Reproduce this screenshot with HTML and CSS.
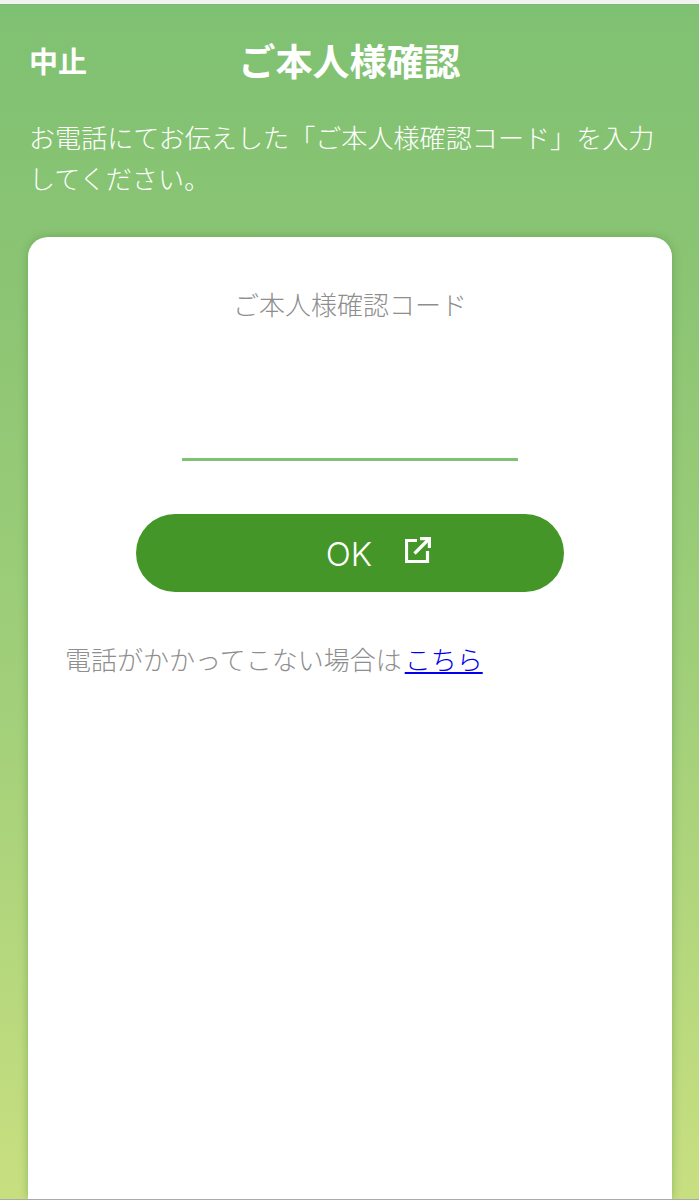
FILE: index.html
```html
<!DOCTYPE html>
<html lang="ja">
<head>
<meta charset="utf-8">
<title>ご本人様確認</title>
<link rel="stylesheet" href="styles.css">
</head>
<body>
<div class="screen">
  <header class="topbar">
    <a class="cancel">中止</a>
    <h1 class="title">ご本人様確認</h1>
  </header>
  <p class="intro">お電話にてお伝えした「ご本人様確認コード」を入力してください。</p>
  <main class="card">
    <div class="label">ご本人様確認コード</div>
    <div class="code-field"></div>
    <button class="ok" type="button">
      <span class="ok-text">OK</span>
      <svg class="ok-icon" viewBox="0 0 26 26" width="26" height="26" fill="none" stroke="#fff" stroke-width="3.2">
        <path d="M12 3.5H1.5V24.5H22.5V14" />
        <path d="M9.5 16.5L23 3" />
        <path d="M15 1.6H24.4V11" />
      </svg>
    </button>
    <p class="help">電話がかかってこない場合は<a class="help-link" href="#">こちら</a></p>
  </main>
</div>
</body>
</html>
```
FILE: styles.css
```css
html, body {
  margin: 0;
  padding: 0;
  height: 1200px;
  overflow: hidden;
  background: #f2f2f2;
}
body {
  font-family: "Liberation Sans", "Noto Sans CJK JP", sans-serif;
}
.screen {
  box-sizing: border-box;
  margin-top: 4px;
  height: 1196px;
  padding: 0 27px 0 28px;
  display: flex;
  flex-direction: column;
  overflow: hidden;
  border-top: 1px solid #7fb874;
  border-bottom: 1px solid #a9a9a9;
  background: linear-gradient(180deg, #7fc172 0%, #8cc574 25%, #a3d07a 60%, #c8df80 100%);
  color: #fff;
}
.topbar {
  position: relative;
  height: 85px;
  display: flex;
  align-items: center;
  justify-content: center;
  flex: none;
}
.cancel {
  position: absolute;
  left: 1px;
  top: 38px;
  font-size: 29px;
  line-height: 40px;
  font-weight: 700;
}
.title {
  margin: 33px 1px 0 0;
  font-size: 37px;
  line-height: 52px;
  font-weight: 700;
}
.intro {
  margin: 29px 0 0 1px;
  font-size: 26.1px;
  line-height: 41px;
  font-weight: 300;
  height: 82px;
  flex: none;
}
.card {
  margin-top: 36px;
  flex: 1;
  background: #fff;
  border-radius: 20px 20px 0 0;
  box-shadow: 0 0 8px rgba(70, 130, 60, 0.45);
  display: flex;
  flex-direction: column;
  align-items: center;
  padding: 0 38px;
}
.label {
  margin-top: 50px;
  font-size: 26px;
  line-height: 38px;
  font-weight: 300;
  color: #8e8e8e;
}
.code-field {
  margin-top: 133px;
  width: 336px;
  height: 3px;
  background: #7fc172;
}
.ok {
  margin-top: 53px;
  width: 428px;
  height: 78px;
  border: 0;
  padding: 0 0 0 57px;
  border-radius: 39px;
  background: #439627;
  color: #fff;
  display: flex;
  align-items: center;
  justify-content: center;
  gap: 33px;
  font-family: inherit;
}
.ok-text {
  font-family: "Inter", "Liberation Sans", sans-serif;
  font-size: 33px;
  font-weight: 300;
  line-height: 80px;
  padding-top: 2px;
}
.ok-icon {
  margin-bottom: 6px;
}
.help {
  align-self: flex-start;
  margin: 49px 0 0 -1px;
  font-size: 26px;
  line-height: 40px;
  font-weight: 300;
  color: #8e8e8e;
}
.help-link {
  margin-left: 3px;
  color: #0000ee;
  text-decoration: underline;
}
```
